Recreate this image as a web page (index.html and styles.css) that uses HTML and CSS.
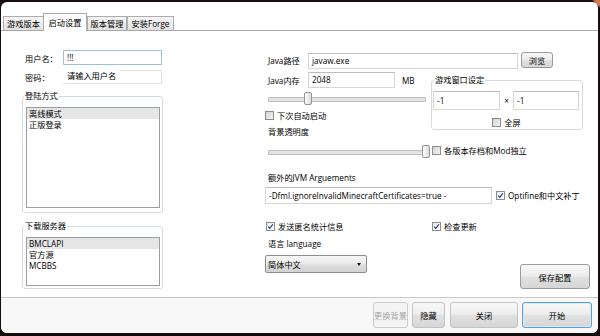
FILE: index.html
```html
<!DOCTYPE html>
<html lang="zh-CN">
<head>
<meta charset="utf-8">
<title>启动设置</title>
<link rel="stylesheet" href="styles.css">
</head>
<body>
<div class="window">
  <div class="tabs">
    <div class="tab t1">游戏版本</div>
    <div class="tab t2 active">启动设置</div>
    <div class="tab t3">版本管理</div>
    <div class="tab t4">安装Forge</div>
  </div>

  <div class="content">
    <div class="left">
      <div class="field f-user"><span class="lbl-l">用户名：</span><div class="input user">!!!</div></div>
      <div class="field f-pass"><span class="lbl-l">密码：</span><div class="input pass"><span class="watermark">请输入用户名</span></div></div>
      <fieldset class="group g-login">
        <legend>登陆方式</legend>
        <ul class="list l-login"><li class="sel">离线模式</li><li>正版登录</li></ul>
      </fieldset>
      <fieldset class="group g-server">
        <legend>下载服务器</legend>
        <ul class="list l-server"><li class="sel">BMCLAPI</li><li>官方源</li><li>MCBBS</li></ul>
      </fieldset>
    </div>

    <div class="right">
      <div class="r-java">
        <span class="lbl-r">Java路径</span>
        <div class="input java">javaw.exe</div>
        <button class="btn browse">浏览</button>
      </div>

      <div class="r-mem">
        <div class="mem-col">
          <div class="mem-row">
            <span class="lbl-r">Java内存</span>
            <div class="input mem">2048</div>
            <span class="mb">MB</span>
          </div>
          <div class="slider s1"><div class="thumb" style="left:36px"></div></div>
          <label class="check c-auto"><span class="box"></span>下次自动启动</label>
          <div class="lbl-b">背景透明度</div>
        </div>
        <fieldset class="group g-win">
          <legend>游戏窗口设定</legend>
          <div class="wsize">
            <div class="input w1">-1</div>
            <span class="times">×</span>
            <div class="input w2">-1</div>
          </div>
          <label class="check c-full"><span class="box"></span>全屏</label>
        </fieldset>
      </div>

      <div class="r-op">
        <div class="slider s2"><div class="thumb" style="left:154px"></div></div>
        <label class="check c-indep"><span class="box"></span>各版本存档和Mod独立</label>
      </div>

      <div class="lbl-b lbl-jvm">额外的JVM Arguements</div>
      <div class="r-jvm">
        <div class="input jvm">-Dfml.ignoreInvalidMinecraftCertificates=true -</div>
        <label class="check c-opt"><span class="box on"><svg viewBox="0 0 9 9" width="7" height="7"><path d="M1.5 4.6 L3.6 7 L7.6 1.6" fill="none" stroke="#1b3c86" stroke-width="1.5"/></svg></span>Optifine和中文补丁</label>
      </div>

      <div class="r-checks">
        <label class="check c-stat"><span class="box on"><svg viewBox="0 0 9 9" width="7" height="7"><path d="M1.5 4.6 L3.6 7 L7.6 1.6" fill="none" stroke="#1b3c86" stroke-width="1.5"/></svg></span>发送匿名统计信息</label>
        <label class="check c-upd"><span class="box on"><svg viewBox="0 0 9 9" width="7" height="7"><path d="M1.5 4.6 L3.6 7 L7.6 1.6" fill="none" stroke="#1b3c86" stroke-width="1.5"/></svg></span>检查更新</label>
      </div>

      <div class="lbl-b lbl-lang">语言 language</div>
      <div class="r-lang">
        <div class="select"><span>简体中文</span><span class="arrow"></span></div>
        <button class="btn save">保存配置</button>
      </div>
    </div>
  </div>

  <div class="footer">
    <button class="btn fb bg" disabled>更换背景</button>
    <button class="btn fb hide">隐藏</button>
    <button class="btn fb close">关闭</button>
    <button class="btn fb start">开始</button>
  </div>
</div>
</body>
</html>
```

FILE: styles.css
```css
* { box-sizing: border-box; }
html, body { margin: 0; padding: 0; }
body {
  width: 600px;
  height: 336px;
  overflow: hidden;
  background: radial-gradient(circle at 600px 0, #d8774a 0, #d8774a 5px, rgba(0,0,0,0) 8px), #170d0d;
  font-family: "Open Sans", "Noto Sans CJK SC", sans-serif;
  font-size: 8.2px;
  color: #000;
}
.window {
  margin: 2px 0 0 1px;
  width: 597px;
  height: 331px;
  background: #fff;
  border-radius: 6px;
  overflow: hidden;
  display: flex;
  flex-direction: column;
}

/* tabs */
.tabs {
  height: 29px;
  flex: none;
  display: flex;
  align-items: flex-end;
  padding-left: 2px;
  border-bottom: 1px solid #a8a8a8;
}
.tab {
  height: 14px;
  line-height: 13px;
  text-align: center;
  white-space: nowrap;
  border: 1px solid #adadad;
  border-bottom: none;
  background: linear-gradient(#f6f6f6, #e1e1e1);
}
.t1 { width: 41px; }
.t2 { width: 44px; margin-left: -1px; }
.t3 { width: 40px; }
.t4 { width: 47px; }
.tab.active {
  height: 18px;
  margin-bottom: -1px;
  line-height: 17px;
  background: #fff;
  position: relative;
}

/* content */
.content {
  height: 266px;
  flex: none;
  display: flex;
  padding-left: 21px;
}
.left {
  width: 141px;
  flex: none;
  display: flex;
  flex-direction: column;
}
.field { display: flex; align-items: center; }
.lbl-l { width: 41px; padding-left: 3px; white-space: nowrap; }
.input {
  border: 1px solid #d6d6d6;
  border-top-color: #bcbcbc;
  background: #fff;
  padding-left: 3px;
  white-space: nowrap;
  overflow: hidden;
}
.f-user { margin-top: 19px; height: 15px; }
.input.user { width: 99px; height: 15px; line-height: 13px; border-color: #9cc0e2; }
.f-pass { margin-top: 5px; height: 14px; }
.input.pass { width: 99px; height: 14px; position: relative; overflow: visible; border-color: #e2e2e2; }
.watermark {
  position: absolute;
  left: -1px;
  top: -1px;
  height: 13px;
  line-height: 12px;
  padding: 0 3px 0 4px;
  background: #fff;
}

.group {
  margin: 0;
  padding: 5px 2px 4px 3px;
  border: 1px solid #d3dce2;
  border-radius: 3px;
  min-width: 0;
}
.group legend {
  padding: 0 1px;
  margin-left: -2px;
  line-height: 12px;
}
.g-login { margin-top: 6px; }
.g-server { margin-top: 7px; padding-bottom: 2px; }
.list {
  margin: 0;
  padding: 0;
  list-style: none;
  width: 134px;
  border: 1px solid #999da4;
}
.l-login { height: 101px; }
.l-server { height: 49px; }
.list li { line-height: 11px; padding-left: 2px; }
.list li.sel { background: #e6e6e6; }

/* right side */
.right {
  margin-left: 101px;
  width: 326px;
  flex: none;
  display: flex;
  flex-direction: column;
}
.lbl-r { width: 44px; padding-left: 4px; white-space: nowrap; }
.r-java { display: flex; align-items: flex-start; margin-top: 21px; height: 17px; }
.r-java .lbl-r { line-height: 16px; margin-top: 1px; }
.input.java { width: 210px; height: 16px; line-height: 14px; margin-top: 1px; }

.btn {
  font: inherit;
  color: #000;
  margin: 0;
  padding: 0;
  border: 1px solid #9b9b9b;
  border-radius: 3px;
  background: linear-gradient(#f7f7f7 0%, #eeeeee 45%, #e0e0e0 55%, #d6d6d6 100%);
  text-align: center;
  white-space: nowrap;
}
.btn.browse { width: 32px; height: 16px; margin-left: 3px; }

.r-mem { display: flex; margin-top: 3px; align-items: flex-start; }
.mem-col { width: 167px; flex: none; display: flex; flex-direction: column; }
.mem-row { display: flex; align-items: center; height: 16px; }
.input.mem { width: 87px; height: 16px; line-height: 14px; }
.mb { margin-left: 7px; }

.slider { position: relative; height: 13px; flex: none; }
.slider::before {
  content: "";
  position: absolute;
  left: 0;
  right: 0;
  top: 5px;
  height: 3px;
  background: #e4e4e4;
  border: 1px solid #bdbdbd;
  border-radius: 1px;
}
.thumb {
  position: absolute;
  top: 0;
  width: 8px;
  height: 13px;
  border: 1px solid #939393;
  border-radius: 2px;
  background: linear-gradient(90deg, #fdfdfd, #dcdcdc);
}
.s1 { margin: 4px 0 0 4px; width: 158px; }
.s2 { margin-left: 4px; width: 161px; }

.check { display: flex; align-items: center; height: 9px; line-height: 9px; white-space: nowrap; }
.box {
  width: 9px;
  height: 9px;
  flex: none;
  margin-right: 3px;
  border: 1px solid #8d8d8d;
  background: linear-gradient(135deg, #d2d2d2, #f4f4f4);
  display: flex;
  align-items: center;
  justify-content: center;
}
.box.on { background: linear-gradient(135deg, #e9e9e9, #ffffff); }
.c-auto { margin: 6px 0 0 1px; }
.lbl-b { margin: 6px 0 0 4px; line-height: 12px; white-space: nowrap; }

.g-win {
  width: 152px;
  margin-top: 2px;
  padding: 5px 2px 2px 1px;
}
.g-win legend { margin-left: 1px; }
.wsize { display: flex; align-items: center; height: 19px; }
.input.w1 { width: 67px; height: 19px; line-height: 17px; }
.input.w2 { width: 66px; height: 19px; line-height: 17px; }
.times { width: 13px; text-align: center; }
.c-full { justify-content: center; margin-top: 8px; }

.r-op { display: flex; align-items: flex-start; margin-top: 7px; }
.c-indep { margin: 1px 0 0 3px; }

.lbl-jvm { margin-top: 14px; }
.r-jvm { display: flex; align-items: center; margin-top: 3px; }
.input.jvm { width: 227px; height: 17px; line-height: 15px; margin-left: 1px; }
.c-opt { margin-left: 4px; }

.r-checks { display: flex; margin-top: 18px; }
.c-stat { width: 166px; margin-left: 2px; }

.lbl-lang { margin-top: 7px; }
.r-lang { display: flex; align-items: flex-start; margin-top: 5px; }
.select {
  width: 102px;
  height: 18px;
  margin-left: 1px;
  display: flex;
  align-items: center;
  padding: 0 5px 0 2px;
  border: 1px solid #8e8e8e;
  border-radius: 2px;
  background: linear-gradient(#f6f6f6 0%, #ececec 45%, #dedede 55%, #d2d2d2 100%);
}
.arrow {
  margin-left: auto;
  width: 0;
  height: 0;
  border-left: 2.5px solid transparent;
  border-right: 2.5px solid transparent;
  border-top: 3px solid #111;
}
.btn.save { width: 70px; height: 25px; margin: 9px 0 0 153px; }

/* footer */
.footer {
  height: 36px;
  flex: none;
  border-top: 1px solid #c8c8c8;
  background: #f8f8f8;
  display: flex;
  justify-content: flex-end;
  align-items: flex-start;
  gap: 4px;
  padding: 4px 6px 0 0;
}
.btn.fb { height: 26px; }
.bg { width: 35px; color: #a5a5a5; border-color: #c9cdd0; background: #f4f4f4; }
.hide { width: 33px; border-color: #c4c4c4; }
.close { width: 68px; margin-left: 1px; border-color: #c4c4c4; }
.start {
  width: 70px;
  border-color: #5d9fd3;
  box-shadow: inset 0 0 0 1px #d3ecfa;
}
```
